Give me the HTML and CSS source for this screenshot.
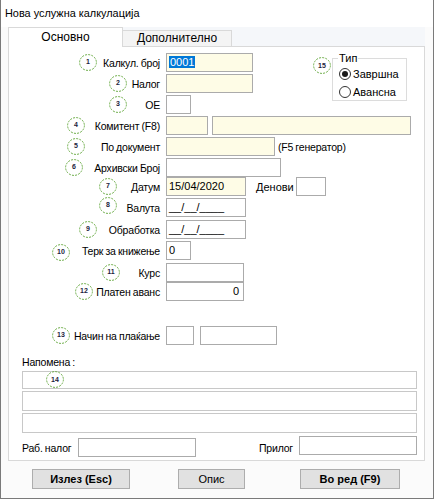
FILE: index.html
```html
<!DOCTYPE html>
<html>
<head>
<meta charset="utf-8">
<link rel="stylesheet" href="styles.css">
</head>
<body>
<div class="window">
  <div class="title">Нова услужна калкулација</div>
  <div class="tabs">
    <div class="tab active">Основно</div>
    <div class="tab">Дополнително</div>
  </div>
  <div class="panel">
    <div class="top">
      <div class="col">
        <div class="row"><span class="badge b1"><svg viewBox="0 0 18 17"><ellipse cx="9" cy="8.5" rx="8.4" ry="7.9"/></svg>1</span><span class="lbl">Калкул. број</span><span class="in yel w87"><span class="sel">0001</span></span></div>
        <div class="row"><span class="badge b2"><svg viewBox="0 0 18 17"><ellipse cx="9" cy="8.5" rx="8.4" ry="7.9"/></svg>2</span><span class="lbl">Налог</span><span class="in yel w87"></span></div>
        <div class="row"><span class="badge b3"><svg viewBox="0 0 18 17"><ellipse cx="9" cy="8.5" rx="8.4" ry="7.9"/></svg>3</span><span class="lbl">ОЕ</span><span class="in w25"></span></div>
      </div>
      <span class="badge b15"><svg viewBox="0 0 18 17"><ellipse cx="9" cy="8.5" rx="8.4" ry="7.9"/></svg>15</span>
      <fieldset class="tip">
        <legend>Тип</legend>
        <div class="radio"><span class="rb on"></span>Завршна</div>
        <div class="radio"><span class="rb"></span>Авансна</div>
      </fieldset>
    </div>
    <div class="col">
      <div class="row"><span class="badge b4"><svg viewBox="0 0 18 17"><ellipse cx="9" cy="8.5" rx="8.4" ry="7.9"/></svg>4</span><span class="lbl">Комитент (F8)</span><span class="in yel w42"></span><span class="in yel w199 ml4"></span></div>
      <div class="row"><span class="badge b5"><svg viewBox="0 0 18 17"><ellipse cx="9" cy="8.5" rx="8.4" ry="7.9"/></svg>5</span><span class="lbl">По документ</span><span class="in yel w109"></span><span class="after">(F5 генератор)</span></div>
      <div class="row"><span class="badge b6"><svg viewBox="0 0 18 17"><ellipse cx="9" cy="8.5" rx="8.4" ry="7.9"/></svg>6</span><span class="lbl">Архивски Број</span><span class="in w115"></span></div>
      <div class="row mt0"><span class="badge b7"><svg viewBox="0 0 18 17"><ellipse cx="9" cy="8.5" rx="8.4" ry="7.9"/></svg>7</span><span class="lbl">Датум</span><span class="in yel w80">15/04/2020</span><span class="denovi">Денови</span><span class="in w30"></span></div>
      <div class="row"><span class="badge b8"><svg viewBox="0 0 18 17"><ellipse cx="9" cy="8.5" rx="8.4" ry="7.9"/></svg>8</span><span class="lbl">Валута</span><span class="in w80">__/__/____</span></div>
      <div class="row mt3"><span class="badge b9"><svg viewBox="0 0 18 17"><ellipse cx="9" cy="8.5" rx="8.4" ry="7.9"/></svg>9</span><span class="lbl">Обработка</span><span class="in w80">__/__/____</span></div>
      <div class="row"><span class="badge b10"><svg viewBox="0 0 18 17"><ellipse cx="9" cy="8.5" rx="8.4" ry="7.9"/></svg>10</span><span class="lbl">Терк за книжење</span><span class="in w25">0</span></div>
      <div class="row mt4"><span class="badge b11"><svg viewBox="0 0 18 17"><ellipse cx="9" cy="8.5" rx="8.4" ry="7.9"/></svg>11</span><span class="lbl">Курс</span><span class="in w78"></span></div>
      <div class="row mt0"><span class="badge b12"><svg viewBox="0 0 18 17"><ellipse cx="9" cy="8.5" rx="8.4" ry="7.9"/></svg>12</span><span class="lbl">Платен аванс</span><span class="in w78 right">0</span></div>
      <div class="row mt25"><span class="badge b13"><svg viewBox="0 0 18 17"><ellipse cx="9" cy="8.5" rx="8.4" ry="7.9"/></svg>13</span><span class="lbl">Начин на плаќање</span><span class="in w28"></span><span class="in w77 ml6"></span></div>
    </div>
    <div class="note">Напомена :</div>
    <div class="lines">
      <div class="line h18"><span class="badge b14"><svg viewBox="0 0 18 17"><ellipse cx="9" cy="8.5" rx="8.4" ry="7.9"/></svg>14</span></div>
      <div class="line h20"></div>
      <div class="line h20"></div>
    </div>
    <div class="bottom">
      <span class="blbl rab">Раб. налог</span>
      <span class="in w118 low"></span>
      <span class="blbl pri">Прилог</span>
      <span class="in w118"></span>
    </div>
  </div>
  <div class="buttons">
    <div class="btn b-exit">Излез (Esc)</div>
    <div class="btn b-opis">Опис</div>
    <div class="btn b-ok">Во ред (F9)</div>
  </div>
</div>
</body>
</html>
```

FILE: styles.css
```css
* { box-sizing: border-box; }
html, body { margin: 0; padding: 0; background: #fff; }
.window {
  width: 434px;
  height: 499px;
  border: 1px solid #7a7a7a;
  border-top: none;
  background: #fbfbfb;
  font-family: "Liberation Sans", Arial, sans-serif;
  font-size: 11px;
  color: #000;
}
.title {
  height: 27px;
  line-height: 26px;
  padding-left: 4px;
  font-size: 10.9px;
  background: #fff;
}
.tabs {
  display: flex;
  align-items: flex-end;
  height: 19px;
  margin-left: 7px;
  margin-right: 8px;
  background: #f5f7fa;
  font-size: 12px;
}
.tab {
  height: 16px;
  width: 110px;
  line-height: 15px;
  text-align: center;
  border: 1px solid #d9d9d9;
  border-bottom: none;
  background: #f4f4f4;
  margin-left: -1px;
}
.tab.active {
  width: 115px;
  height: 20px;
  margin-left: 0;
  margin-bottom: -1px;
  line-height: 18px;
  background: #fff;
  position: relative;
  z-index: 1;
}
.panel {
  margin-left: 7px;
  width: 417px;
  height: 415px;
  border: 1px solid #d9d9d9;
  background: #fff;
  padding-top: 6px;
  font-size: 10.5px;
  letter-spacing: -0.2px;
  word-spacing: -0.5px;
}
.top { display: flex; position: relative; }
.col { display: flex; flex-direction: column; gap: 2px; }
.top + .col { margin-top: 2px; }
.row {
  display: flex;
  align-items: center;
  height: 19px;
  position: relative;
}
.row.mt0 { margin-top: -2px; }
.row.mt3 { margin-top: 1px; }
.row.mt4 { margin-top: 1px; }
.row.mt25 { margin-top: 23px; }
.lbl {
  width: 151px;
  margin-right: 6px;
  text-align: right;
  white-space: nowrap;
}
.in {
  display: block;
  height: 19px;
  border: 1px solid #ababab;
  background: #fff;
  padding: 0 2px;
  line-height: 16px;
  white-space: nowrap;
  font-size: 11px;
  letter-spacing: 0;
  word-spacing: 0;
}
.in.yel { background: #fefce6; }
.in.right { text-align: right; padding-right: 4px; }
.sel { background: #0078d7; color: #fff; padding: 0 1px; }
.w25 { width: 25px; }
.w28 { width: 28px; }
.w30 { width: 30px; }
.w42 { width: 42px; }
.w77 { width: 77px; }
.w78 { width: 78px; }
.w80 { width: 80px; }
.w87 { width: 87px; }
.w109 { width: 109px; }
.w115 { width: 115px; }
.w118 { width: 118px; }
.w199 { width: 199px; }
.ml4 { margin-left: 4px; }
.ml6 { margin-left: 6px; }
.after { margin-left: 3px; }
.denovi { margin-left: 10px; margin-right: 2px; letter-spacing: 0; font-size: 11px; }

.badge {
  position: absolute;
  top: 50%;
  width: 18px;
  height: 17px;
  margin-top: -9px;
  font-size: 7px;
  font-weight: bold;
  letter-spacing: 0;
  color: #1b1d40;
  display: flex;
  align-items: center;
  justify-content: center;
  line-height: 1;
  padding-bottom: 1px;
}
.badge svg {
  position: absolute;
  left: 0;
  top: 0;
  width: 18px;
  height: 17px;
}
.badge ellipse {
  fill: none;
  stroke: #6aab45;
  stroke-width: 1;
  stroke-dasharray: 2 1.2;
}
.b1 { left: 70px; }
.b2 { left: 100px; }
.b3 { left: 100px; }
.b4 { left: 58px; }
.b5 { left: 58px; }
.b6 { left: 56px; }
.b7 { left: 90px; }
.b8 { left: 90px; margin-top: -11px; }
.b9 { left: 70px; }
.b10 { left: 43px; margin-top: -7px; }
.b11 { left: 93px; }
.b12 { left: 66px; }
.b13 { left: 43px; }
.b14 { left: 23px; }
.b15 { left: 304px; top: 4px; margin-top: 0; }

.tip {
  margin: -1px 0 0 79px;
  padding: 4px 0 0 6px;
  width: 75px;
  height: 49px;
  border: 1px solid #dcdcdc;
  font-size: 11px;
  letter-spacing: 0;
  word-spacing: 0;
}
.tip legend {
  padding: 0 1px;
  margin-left: -1px;
  line-height: 13px;
  font-size: 11px;
}
.radio {
  display: flex;
  align-items: center;
  height: 18px;
  margin-top: -4px;
}
.radio + .radio { margin-top: 0; }
.rb {
  width: 12px;
  height: 12px;
  border: 1px solid #333;
  border-radius: 50%;
  margin-right: 2px;
  background: #fff;
  position: relative;
}
.rb.on::after {
  content: "";
  position: absolute;
  left: 2px;
  top: 2px;
  width: 6px;
  height: 6px;
  border-radius: 50%;
  background: #1a1a1a;
}

.note {
  margin: 11px 0 0 13px;
  height: 13px;
  line-height: 13px;
}
.lines {
  margin: 2px 0 0 13px;
  width: 395px;
  display: flex;
  flex-direction: column;
  gap: 2px;
}
.line {
  border: 1px solid #c8c8c8;
  background: #fff;
  position: relative;
}
.h18 { height: 18px; }
.h20 { height: 20px; }
.bottom {
  display: flex;
  align-items: flex-start;
  margin: 3px 0 0 13px;
}
.blbl { margin-top: 6px; white-space: nowrap; }
.blbl.rab { width: 56px; }
.in.low { margin-top: 2px; }
.blbl.pri { margin-left: 63px; width: 40px; }

.buttons {
  display: flex;
  margin-top: 8px;
  height: 20px;
}
.btn {
  height: 20px;
  line-height: 18px;
  text-align: center;
  background: #e1e1e1;
  border: 1px solid #adadad;
}
.b-exit { width: 98px; margin-left: 31px; font-weight: bold; }
.b-opis { width: 67px; margin-left: 48px; }
.b-ok { width: 100px; margin-left: 55px; font-weight: bold; }
```
